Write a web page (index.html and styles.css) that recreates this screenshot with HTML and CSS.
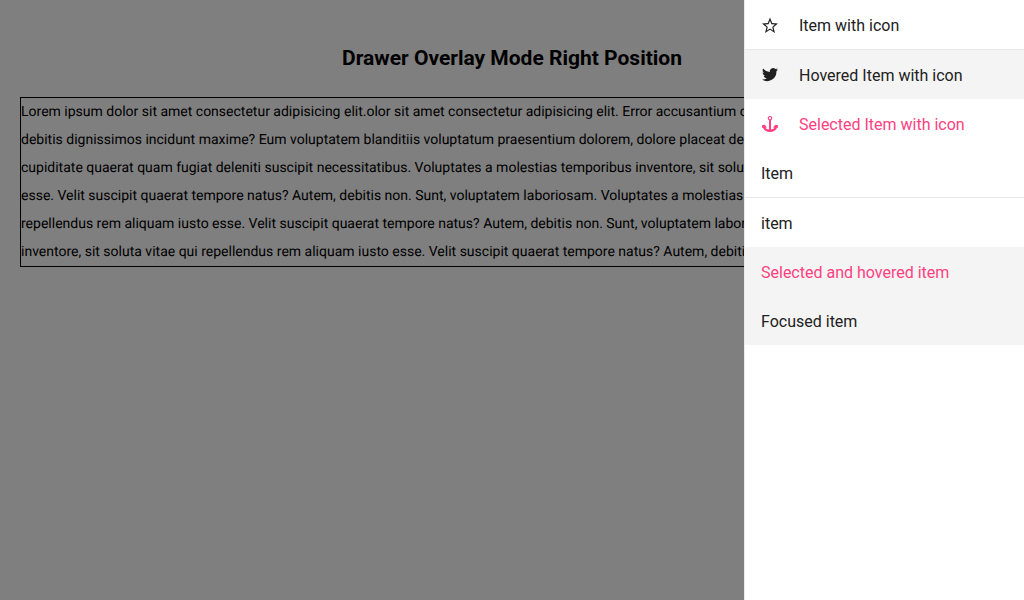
FILE: index.html
```html
<!DOCTYPE html>
<html lang="en">
<head>
<meta charset="utf-8">
<meta name="viewport" content="width=device-width, initial-scale=1">
<title>Drawer Overlay Mode Right Position</title>
<link rel="stylesheet" href="styles.css">
</head>
<body>
<main class="page">
  <h2 class="title">Drawer Overlay Mode Right Position</h2>
  <p class="content">Lorem ipsum dolor sit amet consectetur adipisicing elit.olor sit amet consectetur adipisicing elit. Error accusantium odit repellat voluptatibus, unde<br>
  debitis dignissimos incidunt maxime? Eum voluptatem blanditiis voluptatum praesentium dolorem, dolore placeat debitis totam quia nemo<br>
  cupiditate quaerat quam fugiat deleniti suscipit necessitatibus. Voluptates a molestias temporibus inventore, sit soluta vitae qui repellendus rem<br>
  esse. Velit suscipit quaerat tempore natus? Autem, debitis non. Sunt, voluptatem laboriosam. Voluptates a molestias temporibus inventore, sit<br>
  repellendus rem aliquam iusto esse. Velit suscipit quaerat tempore natus? Autem, debitis non. Sunt, voluptatem laboriosam. Voluptates a molestias<br>
  inventore, sit soluta vitae qui repellendus rem aliquam iusto esse. Velit suscipit quaerat tempore natus? Autem, debitis non. Sunt, voluptatem.</p>
</main>
<div class="overlay"></div>
<nav class="drawer" aria-label="Drawer">
  <ul class="items">
    <li><button type="button" class="item">
      <svg class="icon" viewBox="0 0 16 16" aria-hidden="true"><path fill-rule="evenodd" d="M8 .5l2.200 5.600 5.800.4-4.500 3.700L13 16 8 12.800 3 16l1.500-5.800L0 6.500l5.800-.4zM8 3.700L6.600 7.300l-3.500.3 2.700 2.300-.9 3.500L8 11.400l3.100 2-.9-3.500 2.700-2.300-3.500-.3z"/></svg>
      <span class="label">Item with icon</span></button></li>
    <li class="separator" role="separator"></li>
    <li><button type="button" class="item hovered">
      <svg class="icon" viewBox="0 1 16 16" aria-hidden="true"><path d="M16 3.500c-.6.300-1.200.4-1.900.5.700-.4 1.200-1 1.400-1.800-.6.400-1.300.6-2.100.8a3.300 3.300 0 0 0-5.600 3C5.100 5.900 2.700 4.600 1.100 2.600c-.9 1.500-.4 3.400 1 4.400-.5 0-1-.2-1.500-.4 0 1.600 1.100 2.900 2.600 3.200-.5.100-1 .2-1.500.1.400 1.300 1.600 2.200 3.100 2.300A6.600 6.600 0 0 1 0 13.500 9.300 9.300 0 0 0 14.400 5.200c.6-.5 1.200-1 1.600-1.700z"/></svg>
      <span class="label">Hovered Item with icon</span></button></li>
    <li><button type="button" class="item selected">
      <svg class="icon" viewBox="0 0 16 16" aria-hidden="true"><path fill-rule="evenodd" d="M8 0a2.200 2.200 0 0 1 1 4.200v9.300c1.700-.2 3-1 3.500-2.100h-1.700L13.500 8.800 16 9.300V12l-.9-.6C14.200 14.200 11.400 16 8 16s-6.200-1.800-7.100-4.600L0 12V9.300l2.500-.5 2.700 2.600H3.500c.5 1.100 1.800 1.900 3.500 2.100V4.200A2.200 2.200 0 0 1 8 0zm0 1.100a1.100 1.100 0 1 0 0 2.200 1.100 1.100 0 0 0 0-2.200z"/></svg>
      <span class="label">Selected Item with icon</span></button></li>
    <li><button type="button" class="item"><span class="label">Item</span></button></li>
    <li class="separator" role="separator"></li>
    <li><button type="button" class="item"><span class="label">item</span></button></li>
    <li><button type="button" class="item selected hovered"><span class="label">Selected and hovered item</span></button></li>
    <li><button type="button" class="item focused"><span class="label">Focused item</span></button></li>
  </ul>
</nav>
</body>
</html>
```
FILE: styles.css
```css
* {
  box-sizing: border-box;
}

body {
  margin: 0;
  background: #fff;
  color: #000;
  font-family: Roboto, "Liberation Sans", sans-serif;
  font-size: 14px;
  line-height: 28px;
}

.page {
  padding: 44px 20px;
}

.title {
  margin: 0 0 25px;
  font-size: 21px;
  font-weight: 700;
  line-height: 28px;
  text-align: center;
}

.content {
  margin: 0;
  border: 1px solid #000;
  text-rendering: geometricPrecision;
}

.overlay {
  position: fixed;
  inset: 0;
  background: rgba(0, 0, 0, 0.5);
}

.drawer {
  position: fixed;
  top: 0;
  right: 0;
  bottom: 0;
  width: 280px;
  overflow: auto;
  border-left: 1px solid #ebebeb;
  background: #fff;
}

.items {
  margin: 0;
  padding: 0;
  list-style: none;
}

.item {
  display: flex;
  align-items: center;
  gap: 21px;
  width: 100%;
  padding: 12px 16px 11px;
  border: 0;
  outline: 0;
  background: transparent;
  color: #212121;
  font-family: inherit;
  font-size: 16px;
  line-height: 24px;
  text-align: left;
  cursor: pointer;
}

.item:hover,
.hovered,
.focused {
  background: #f4f4f4;
}

.selected {
  color: #ff4081;
}

.label {
  padding-top: 2px;
}

.icon {
  width: 16px;
  height: 16px;
  margin-left: 1px;
  fill: currentColor;
}

.separator {
  height: 1px;
  background: #e8e8e8;
}
```
